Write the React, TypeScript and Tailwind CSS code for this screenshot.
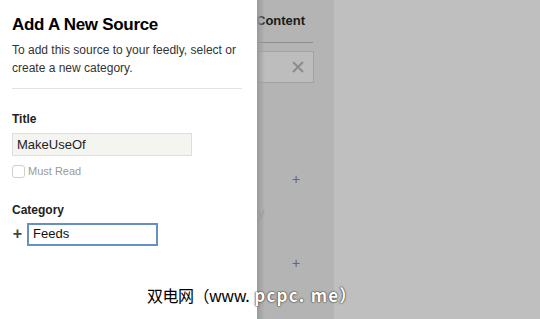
import React from 'react'

const SourcePanel = () => {
  return (
    <div className="relative z-10 w-[257px] h-full bg-white px-3 pt-[15px]" style={{ fontFamily: '"Liberation Sans", Arial, sans-serif' }}>
      <h1 className="text-[17px] leading-[20px] font-bold text-black tracking-[-0.3px]">Add A New Source</h1>
      <p className="mt-[6px] text-[12px] leading-[18px] text-[#333]">
        To add this source to your feedly, select or
        <br />
        create a new category.
      </p>
      <div className="mt-[11px] h-px w-[230px] bg-[#e2e2e2]" />

      <div className="mt-[23px] text-[12px] font-bold text-[#222] leading-[14px]">Title</div>
      <div className="mt-[7px] w-[180px] h-[23px] border border-[#dedede] bg-[#f4f4f0] px-[4px] flex items-center text-[13px] text-[#222]">
        MakeUseOf
      </div>
      <label className="mt-[7px] flex items-center gap-[3px] text-[11px] text-[#9a9a9a]">
        <span className="w-[13px] h-[13px] rounded-[3px] border border-[#cfcfcf] bg-white" />
        Must Read
      </label>

      <div className="mt-[23px] text-[12px] font-bold text-[#222] leading-[14px]">Category</div>
      <div className="mt-[6px] flex items-center gap-[4px]">
        <span className="w-[11px] text-[16px] font-bold text-[#444] leading-none text-center">+</span>
        <div className="w-[131px] h-[23px] border-2 border-[#6690c4] bg-white px-[4px] flex items-center text-[13px] text-[#111]">
          Feeds
        </div>
      </div>
    </div>
  )
}

const App = () => {
  return (
    <div className="relative w-[540px] h-[319px] overflow-hidden flex bg-[#bfbfbf]" style={{ fontFamily: '"Liberation Sans", Arial, sans-serif' }}>
      <SourcePanel />
      <div className="relative w-[77px] h-full bg-[#b4b4b4] overflow-hidden">
        <div className="absolute left-0 top-0 h-full w-[8px] bg-gradient-to-r from-[#9a9a9a] to-transparent" />
        <div className="ml-[-1px] pt-[13px] text-[13px] font-bold text-[#1a1a1a] leading-[16px]">Content</div>
        <div className="mt-[13px] h-px w-[56px] bg-[#8c8c8c]" />
        <div className="mt-[8px] w-[57px] h-[32px] border border-[#a2a2a2] bg-[#bdbdbd] flex items-center justify-end pr-[9px]">
          <svg width="12" height="12" viewBox="0 0 12 12" stroke="#8c8c8c" strokeWidth="2">
            <path d="M1 1 L11 11 M11 1 L1 11" />
          </svg>
        </div>
        <div className="mt-[88px] ml-[35px] text-[14px] text-[#666] leading-[16px]">+</div>
        <div className="mt-[18px] ml-[1px] text-[13px] text-[#9c9c9c] leading-[16px]">y</div>
        <div className="mt-[34px] ml-[35px] text-[14px] text-[#666] leading-[16px]">+</div>
      </div>
      <div className="flex-1 h-full bg-[#bfbfbf]" />

      <div className="absolute left-[147px] top-[285px] z-20 flex items-center text-[16px] leading-[20px] whitespace-nowrap" style={{ fontFamily: '"Noto Sans CJK SC", sans-serif' }}>
        <span className="text-black tracking-[-0.5px]">双电网（www.</span>
        <span className="ml-[5px] text-[17px] text-white font-bold tracking-[1.2px] [text-shadow:0_0_2px_#333,0_0_1px_#000]">pcpc. me）</span>
      </div>
    </div>
  )
}

export default App
